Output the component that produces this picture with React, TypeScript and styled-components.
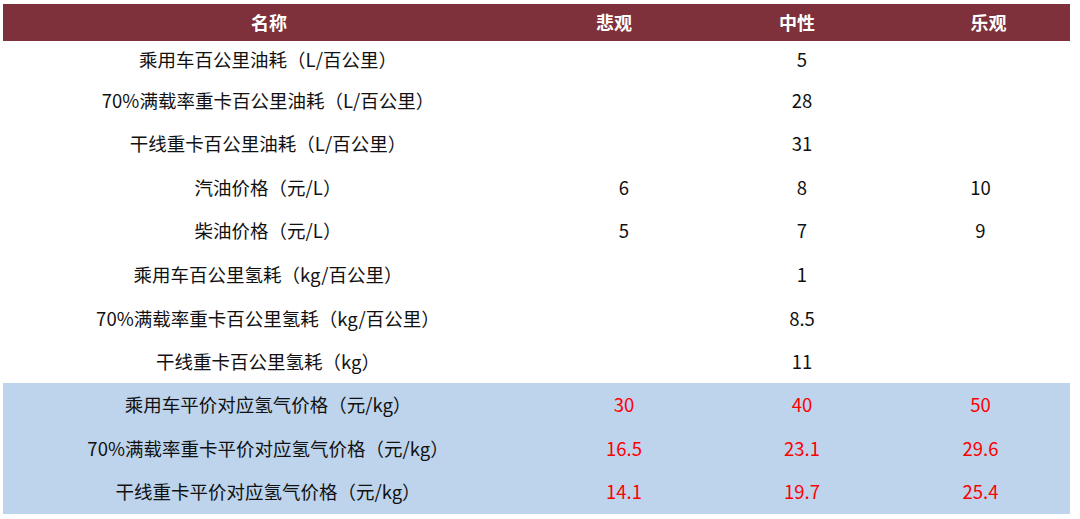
import React from 'react';
import styled, { createGlobalStyle } from 'styled-components';

const GlobalStyle = createGlobalStyle`
  body {
    margin: 0;
    background: #ffffff;
    font-family: "Noto Sans CJK SC", "Noto Sans", sans-serif;
  }
`;

const rows = [
  { name: '乘用车百公里油耗（L/百公里）', values: ['', '5', ''], h: 39 },
  { name: '70%满载率重卡百公里油耗（L/百公里）', values: ['', '28', ''], h: 42 },
  { name: '干线重卡百公里油耗（L/百公里）', values: ['', '31', ''], h: 44 },
  { name: '汽油价格（元/L）', values: ['6', '8', '10'], h: 44 },
  { name: '柴油价格（元/L）', values: ['5', '7', '9'], h: 43 },
  { name: '乘用车百公里氢耗（kg/百公里）', values: ['', '1', ''], h: 44 },
  { name: '70%满载率重卡百公里氢耗（kg/百公里）', values: ['', '8.5', ''], h: 44 },
  { name: '干线重卡百公里氢耗（kg）', values: ['', '11', ''], h: 42 },
];

const results = [
  { name: '乘用车平价对应氢气价格（元/kg）', values: ['30', '40', '50'], h: 44 },
  { name: '70%满载率重卡平价对应氢气价格（元/kg）', values: ['16.5', '23.1', '29.6'], h: 44 },
  { name: '干线重卡平价对应氢气价格（元/kg）', values: ['14.1', '19.7', '25.4'], h: 43 },
];

const headers = [
  { label: '名称', shift: 0 },
  { label: '悲观', shift: -10 },
  { label: '中性', shift: -5 },
  { label: '乐观', shift: 8 },
];

export default function App() {
  return (
    <>
      <GlobalStyle />
      <Page>
        <Table>
          <HeadRow>
            {headers.map((hd) => (
              <HeadCell key={hd.label} $shift={hd.shift}>
                {hd.label}
              </HeadCell>
            ))}
          </HeadRow>
          {rows.map((r) => (
            <Row key={r.name} $h={r.h}>
              <NameCell>{r.name}</NameCell>
              {r.values.map((v, i) => (
                <ValueCell key={i}>{v}</ValueCell>
              ))}
            </Row>
          ))}
          <ResultBlock>
            {results.map((r) => (
              <Row key={r.name} $h={r.h}>
                <NameCell>{r.name}</NameCell>
                {r.values.map((v, i) => (
                  <ValueCell key={i} $highlight>
                    {v}
                  </ValueCell>
                ))}
              </Row>
            ))}
          </ResultBlock>
        </Table>
      </Page>
    </>
  );
}

const Page = styled.div`
  width: 1080px;
  height: 519px;
  padding: 4px 10px 0 3px;
  box-sizing: border-box;
`;

const Table = styled.div`
  width: 1067px;
  display: flex;
  flex-direction: column;
`;

const cols = '532px 178px 178px 179px';

const HeadRow = styled.div`
  display: grid;
  grid-template-columns: ${cols};
  height: 37px;
  padding-bottom: 2px;
  box-sizing: border-box;
  background: #7e313b;
  align-items: center;
`;

const HeadCell = styled.div<{ $shift: number }>`
  text-align: center;
  color: #ffffff;
  font-size: 18px;
  font-weight: 700;
  transform: translateX(${(p) => p.$shift}px);
`;

const Row = styled.div<{ $h: number }>`
  display: grid;
  grid-template-columns: ${cols};
  height: ${(p) => p.$h}px;
  padding-bottom: 3px;
  box-sizing: border-box;
  align-items: center;
`;

const NameCell = styled.div`
  text-align: center;
  color: #111111;
  font-size: 18.5px;
  padding-right: 2px;
`;

const ValueCell = styled.div<{ $highlight?: boolean }>`
  text-align: center;
  color: ${(p) => (p.$highlight ? '#ff0000' : '#111111')};
  font-size: 18.5px;
`;

const ResultBlock = styled.div`
  background: #bed4ec;
  display: flex;
  flex-direction: column;
`;
